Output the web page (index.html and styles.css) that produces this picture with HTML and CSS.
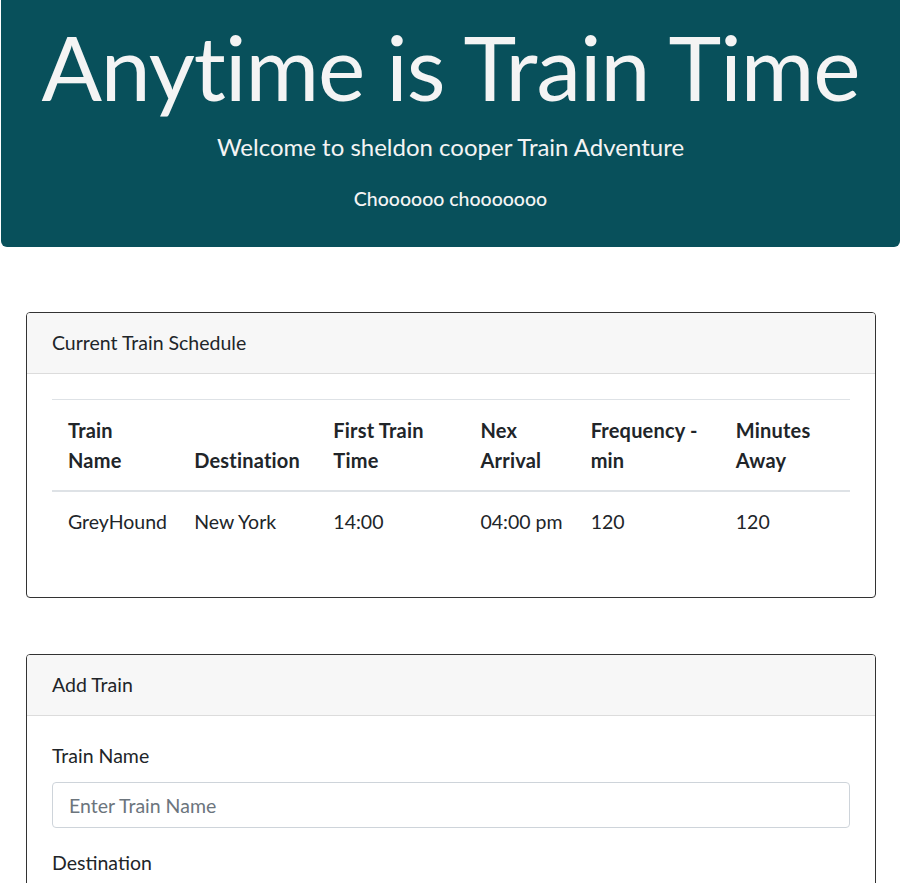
FILE: index.html
```html
<!DOCTYPE html>
<html lang="en">
<head>
<meta charset="utf-8">
<title>Train Time</title>
<link rel="stylesheet" href="styles.css">
</head>
<body>
<header class="hero">
  <h1 class="hero-title">Anytime is Train Time</h1>
  <p class="hero-sub">Welcome to sheldon cooper Train Adventure</p>
  <p class="hero-choo">Choooooo chooooooo</p>
</header>
<main class="content">
  <section class="card">
    <div class="card-header">Current Train Schedule</div>
    <div class="card-body">
      <table class="schedule">
        <thead>
          <tr>
            <th class="c1">Train Name</th>
            <th class="c2">Destination</th>
            <th class="c3">First Train Time</th>
            <th class="c4">Nex Arrival</th>
            <th class="c5">Frequency - min</th>
            <th class="c6">Minutes Away</th>
          </tr>
        </thead>
        <tbody>
          <tr>
            <td>GreyHound</td>
            <td>New York</td>
            <td>14:00</td>
            <td>04:00 pm</td>
            <td>120</td>
            <td>120</td>
          </tr>
        </tbody>
      </table>
    </div>
  </section>
  <section class="card card-form">
    <div class="card-header">Add Train</div>
    <div class="card-body">
      <div class="form-group">
        <label class="form-label" for="name">Train Name</label>
        <input class="form-input" id="name" type="text" placeholder="Enter Train Name">
      </div>
      <div class="form-group">
        <label class="form-label" for="dest">Destination</label>
        <input class="form-input" id="dest" type="text" placeholder="Enter Destination">
      </div>
    </div>
  </section>
</main>
</body>
</html>
```

FILE: styles.css
```css
* { box-sizing: border-box; }
html, body {
  margin: 0;
  padding: 0;
  background: #fff;
}
body {
  font-family: "Lato", "Open Sans", sans-serif;
  font-size: 19.5px;
  color: #212529;
  line-height: 30px;
}
.hero {
  margin: 0 2px 0 1px;
  height: 247px;
  background: #08505b;
  border-radius: 0 0 6px 6px;
  color: #f4f4f4;
  text-align: center;
  padding-top: 13px;
}
.hero-title {
  margin: 0;
  font-weight: 400;
  font-size: 89.5px;
  line-height: 108px;
  letter-spacing: -1px;
}
.hero-sub {
  margin: 11px 0 0;
  font-size: 24px;
  line-height: 30px;
  font-weight: 400;
}
.hero-choo {
  margin: 22px 0 0;
  font-size: 19.5px;
  line-height: 30px;
  font-weight: 500;
}
.content {
  padding: 65px 26px 0 26px;
}
.card {
  border: 1px solid #333;
  border-radius: 4px;
  overflow: hidden;
  margin-bottom: 56px;
}
.card-header {
  background: #f7f7f7;
  border-bottom: 1px solid #dcdcdc;
  padding: 15px 25px;
  height: 61px;
}
.card-body {
  padding: 25px;
}
.schedule {
  width: 100%;
  table-layout: fixed;
  border-collapse: collapse;
  margin-bottom: 20px;
}
.schedule th,
.schedule td {
  text-align: left;
  padding: 15px 16px;
}
.schedule th {
  vertical-align: bottom;
  font-weight: 700;
  font-size: 20px;
  letter-spacing: 0.2px;
  border-top: 1px solid #dee2e6;
  border-bottom: 2px solid #dee2e6;
}
.schedule td {
  vertical-align: top;
  white-space: nowrap;
}
.c1 { width: 126px; padding-right: 40px; }
.c2 { width: 139px; }
.c3 { width: 147px; }
.c4 { width: 110px; }
.c5 { width: 145px; }
.c6 { width: 130px; }
.form-group {
  margin-bottom: 20px;
}
.form-label {
  display: block;
  margin-bottom: 11px;
}
.form-input {
  display: block;
  width: 100%;
  height: 46px;
  padding: 8px 16px;
  font-family: inherit;
  font-size: 19.5px;
  color: #495057;
  border: 1px solid #ced4da;
  border-radius: 4px;
  background: #fff;
}
.form-input::placeholder {
  color: #6c757d;
}
```
